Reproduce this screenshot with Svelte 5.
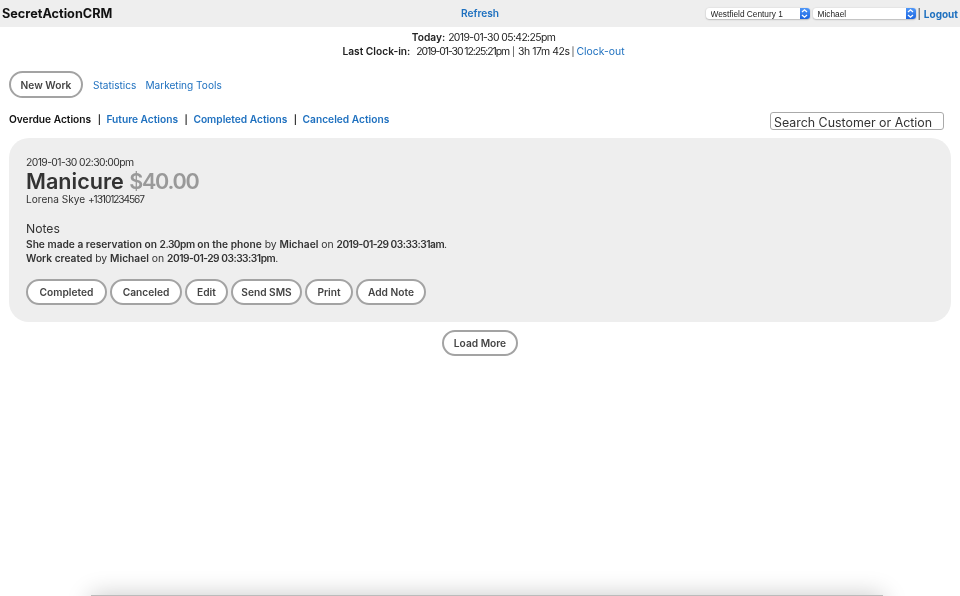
<script>
  const actions = [
    { label: 'Completed', width: 81 },
    { label: 'Canceled', width: 72 },
    { label: 'Edit', width: 43 },
    { label: 'Send SMS', width: 71 },
    { label: 'Print', width: 48 },
    { label: 'Add Note', width: 70 }
  ];
</script>

{#snippet chevrons()}
  <span class="chip">
    <svg width="9" height="13" viewBox="0 0 9 13" fill="none" stroke="#fff" stroke-width="1.3">
      <path d="M2 5 L4.5 2.8 L7 5" />
      <path d="M2 8 L4.5 10.2 L7 8" />
    </svg>
  </span>
{/snippet}

<div class="page">
  <header class="topbar">
    <div class="brand">SecretActionCRM</div>
    <a class="refresh" href="#top">Refresh</a>
    <div class="controls">
      <div class="select site">
        <select><option>Westfield Century 1</option></select>
        {@render chevrons()}
      </div>
      <div class="select user">
        <select><option>Michael</option></select>
        {@render chevrons()}
      </div>
      <span class="sep">|</span>
      <a class="logout" href="#top">Logout</a>
    </div>
  </header>

  <section class="clock">
    <div class="line"><b>Today:</b> <span class="num">2019-01-30 05:42:25pm</span></div>
    <div class="line"><b>Last Clock-in:</b> <span class="narrow">2019-01-30 12:25:21pm</span> <span class="pipe">|</span> <span class="dur">3h 17m 42s</span> <span class="pipe last">|</span> <a href="#top">Clock-out</a></div>
  </section>

  <nav class="primary">
    <button class="pill new">New Work</button>
    <a href="#top">Statistics</a>
    <a href="#top">Marketing Tools</a>
  </nav>

  <div class="tabs">
    <div class="tablist">
      <b>Overdue Actions</b><span class="bar">|</span>
      <a href="#top">Future Actions</a><span class="bar">|</span>
      <a href="#top">Completed Actions</a><span class="bar">|</span>
      <a href="#top">Canceled Actions</a>
    </div>
    <input class="search" placeholder="Search Customer or Action" />
  </div>

  <article class="card">
    <div class="when num">2019-01-30 02:30:00pm</div>
    <h2>Manicure <span>$40.00</span></h2>
    <div class="who">Lorena Skye <span class="narrow">+13101234567</span></div>
    <h3>Notes</h3>
    <p><b>She made a reservation on <span class="bnum">2.30pm</span> on the phone</b> by <b>Michael</b> on <b class="bnum">2019-01-29 03:33:31am</b>.</p>
    <p><b>Work created</b> by <b>Michael</b> on <b class="bnum">2019-01-29 03:33:31pm</b>.</p>
    <div class="actions">
      {#each actions as a}
        <button class="pill" style:width="{a.width}px">{a.label}</button>
      {/each}
    </div>
  </article>

  <div class="more"><button class="pill load">Load More</button></div>

  <div class="sheet"></div>
</div>

<style>
  :global(body) {
    margin: 0;
    background: #fff;
    overflow: hidden;
  }
  .page {
    position: relative;
    height: 596px;
    overflow: hidden;
    will-change: transform;
    font-family: Inter, "Liberation Sans", sans-serif;
    font-size: 10.4px;
    color: #333;
  }
  a {
    color: #1e70bf;
    text-decoration: none;
  }
  b {
    font-weight: 600;
    font-size: 10.2px;
  }
  .num {
    letter-spacing: -0.6px;
  }
  .dur {
    letter-spacing: -0.4px;
  }
  .narrow {
    letter-spacing: -1.05px;
  }
  .clock .narrow {
    margin-left: 3px;
  }
  .bnum {
    letter-spacing: -0.5px;
  }
  .pipe {
    font-size: 9px;
    color: #333;
  }
  .pipe.last {
    margin: 0 -1px 0 -1px;
  }
  .topbar {
    height: 27px;
    background: #eee;
    display: grid;
    grid-template-columns: 1fr auto 1fr;
    align-items: center;
  }
  .brand {
    padding-left: 2px;
    font-size: 12.7px;
    font-weight: 700;
    color: #111;
  }
  .refresh {
    font-weight: 600;
    font-size: 10.2px;
    position: relative;
    top: -1px;
  }
  .controls {
    display: flex;
    justify-content: flex-end;
    align-items: center;
    padding-right: 2px;
  }
  .select {
    display: flex;
    height: 11px;
    background: #fff;
    border-radius: 3px;
    box-shadow: 0 0.5px 1.5px rgba(0, 0, 0, 0.35);
    overflow: hidden;
  }
  .site {
    width: 104px;
    margin-right: 3px;
  }
  .user {
    width: 103px;
  }
  select {
    flex: 1;
    min-width: 0;
    appearance: none;
    border: 0;
    background: transparent;
    padding: 0 0 0 5px;
    margin: 0;
    font: 8.3px "Liberation Sans", sans-serif;
    color: #222;
    outline: 0;
  }
  .chip {
    width: 10px;
    display: flex;
    align-items: center;
    justify-content: center;
    background: linear-gradient(#4f97f8, #1a64e0);
  }
  .sep {
    color: #222;
    font-size: 10px;
    margin: 0 3px 0 2px;
  }
  .logout {
    font-weight: 700;
    font-size: 10px;
  }
  .clock {
    text-align: center;
    padding: 3px 0 0 7px;
    color: #222;
  }
  .line {
    height: 14px;
    line-height: 14px;
  }
  .primary {
    display: flex;
    align-items: center;
    gap: 10px;
    padding: 13px 9px 0;
    font-size: 10.1px;
  }
  .primary a + a {
    margin-left: -1px;
  }
  .pill {
    height: 26px;
    padding: 0;
    background: #fff;
    border: 2px solid #a3a3a3;
    border-radius: 13px;
    font-family: inherit;
    font-size: 10.2px;
    font-weight: 600;
    color: #444;
    box-sizing: border-box;
  }
  .new {
    height: 27px;
    border-radius: 14px;
    width: 74px;
  }
  .load {
    width: 76px;
  }
  .tabs {
    display: flex;
    justify-content: space-between;
    align-items: flex-start;
    padding: 14px 16px 0 9px;
    height: 26px;
  }
  .tablist {
    height: 14px;
    font-size: 10.2px;
    font-weight: 600;
    color: #111;
    line-height: 14px;
  }
  .tablist b {
    color: #111;
  }
  .bar {
    margin: 0 3px 0 6.5px;
    font-size: 9px;
    color: #222;
  }
  .search {
    width: 174px;
    height: 18px;
    box-sizing: border-box;
    border: 1px solid #aaa;
    border-radius: 3px;
    padding: 2px 3px 0;
    font-family: inherit;
    font-size: 12.4px;
    background: #fff;
  }
  .search::placeholder {
    color: #333;
    opacity: 1;
  }
  .card {
    margin: 0 9px;
    height: 184px;
    box-sizing: border-box;
    padding: 18px 17px 0;
    background: #eee;
    border-radius: 20px;
  }
  .when,
  .who {
    height: 13px;
    line-height: 13px;
  }
  .when {
    margin-bottom: 1px;
  }
  .who {
    font-size: 10.1px;
  }
  h2 {
    margin: 0;
    font-size: 21.6px;
    line-height: 23px;
    font-weight: 600;
    color: #333;
  }
  h2 span {
    color: #999;
    letter-spacing: -1.3px;
  }
  h3 {
    margin: 15px 0 0;
    font-size: 12.2px;
    line-height: 16px;
    font-weight: 400;
  }
  p {
    margin: 0;
    height: 14px;
    line-height: 14px;
  }
  .actions {
    display: flex;
    gap: 3px;
    margin-top: 14px;
  }
  .more {
    display: flex;
    justify-content: center;
    padding-top: 8px;
  }
  .sheet {
    position: absolute;
    left: 91px;
    width: 792px;
    top: 595px;
    height: 40px;
    background: #bbb;
    box-shadow: 0 0 24px rgba(0, 0, 0, 0.22);
  }
</style>
